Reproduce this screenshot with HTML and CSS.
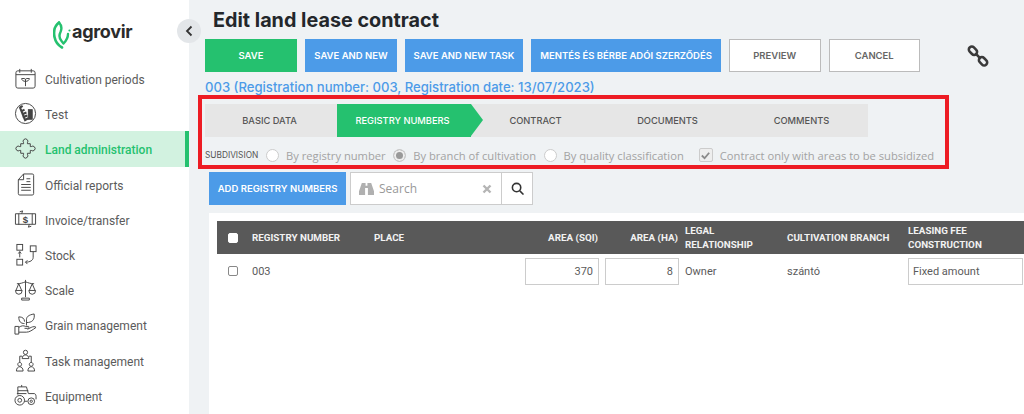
FILE: index.html
```html
<!DOCTYPE html>
<html lang="en">
<head>
  <meta charset="UTF-8" />
  <title>Edit land lease contract</title>
  <link rel="stylesheet" href="styles.css">
</head>
<body>
  <aside class="sidebar">
    <div class="logo">
      <svg class="logo-mark" viewBox="0 0 18 28" width="18" height="28" fill="none" stroke="#25c16f" stroke-linecap="round" stroke-linejoin="round">
        <path stroke-width="2.600" d="M6 1.500C1.500 5 .5 11 1.500 16c1 5 4 8.500 7.500 10.500"/>
        <path stroke-width="2.400" d="M6 1.500c3 3 3 6 1.500 9.500-1.500 3-1.500 6 1 9l2 2.500c2.500-2.500 4.500-6 4.500-9.500"/>
        <circle cx="16.500" cy="9.500" r="1.100" fill="#25c16f" stroke="none"/>
      </svg>
      <span class="logo-text">agrovir</span>
    </div>
    <button class="collapse">
      <svg viewBox="0 0 10 12" width="10" height="12" fill="none" stroke="#333" stroke-width="1.800"><path d="M7.500 1.500 3 6l4.500 4.500"/></svg>
    </button>
    <nav class="menu">
      <a class="menu-item">
        <svg class="menu-icon" viewBox="0 0 24 24"><rect x="2" y="4" width="20" height="18" rx="2"/><path d="M2 8h20M6 2v4M18 2v4M12 20v-7M12 15c-2 0-4-1-4-3h3c1 0 1 2 1 3zM12 15c2 0 4-1 4-3h-3c-1 0-1 2-1 3z"/></svg>
        <span>Cultivation periods</span>
      </a>
      <a class="menu-item">
        <svg class="menu-icon" viewBox="0 0 24 24"><circle cx="12" cy="12" r="10.500"/><path class="thick" d="M6 5l6 15M9 4 6 6M11 8 7 10M13 11l-5 2M14 14l-5 2M15 17l-4 2"/><rect class="solid" x="15" y="8" width="4" height="10"/></svg>
        <span>Test</span>
      </a>
      <a class="menu-item active">
        <svg class="menu-icon" viewBox="0 0 24 24"><path d="M7 7h3V6a2.500 2.500 0 1 1 4 0v1h3v3h1a2.500 2.500 0 1 1 0 4h-1v3h-3v1a2.500 2.500 0 1 1-4 0v-1H7v-3H6a2.500 2.500 0 1 1 0-4h1z"/></svg>
        <span>Land administration</span>
      </a>
      <a class="menu-item">
        <svg class="menu-icon" viewBox="0 0 24 24"><path d="M10 1h9a1.500 1.500 0 0 1 1.500 1.500v19A1.500 1.500 0 0 1 19 23H6a1.500 1.500 0 0 1-1.500-1.500V7zM10 1v6H4.500M13 6h4M13 9h4M7.500 12h10M7.500 15h10M7.500 18h10"/></svg>
        <span>Official reports</span>
      </a>
      <a class="menu-item">
        <svg class="menu-icon" viewBox="0 0 24 24"><path d="M5 6H1.500v11h4M19 6h3.500v11H19M8 6l1-3-3 1M16 17l-1 3 3-1"/><rect x="5" y="6" width="14" height="11"/><text class="icon-text" x="12" y="15.500">$</text></svg>
        <span>Invoice/transfer</span>
      </a>
      <a class="menu-item">
        <svg class="menu-icon" viewBox="0 0 24 24"><rect x="3" y="1.500" width="6" height="6"/><rect x="3" y="17" width="6" height="6"/><rect x="17" y="3" width="6" height="6"/><path d="M6 15V9M4.500 11 6 9l1.500 2M20 9v6c0 3-3 5-8 5M14 18l-2 2 2 2"/></svg>
        <span>Stock</span>
      </a>
      <a class="menu-item">
        <svg class="menu-icon" viewBox="0 0 24 24"><path d="M12 2v18M3 6c4 0 6-1 9-2 3 1 5 2 9 2M8 23h8v-2H8zM5 6l-3 7M5 6l3 7M19 6l-3 7M19 6l3 7M1.500 13a3.500 4 0 0 0 7 0zM15.500 13a3.500 4 0 0 0 7 0z"/></svg>
        <span>Scale</span>
      </a>
      <a class="menu-item">
        <svg class="menu-icon" viewBox="0 0 24 24"><path d="M1 14h4v8H1zM5 15c3-2 5-2 7-1h3c1 0 1 2-1 2h-3M5 20h8c3 0 6-2 10-5-1-1-3-1-5 0l-4 2M13 13V7c0-3 2-5 8-6 1 6-2 9-8 9M11 11c-4 0-6-2-6-7 4 0 6 2 6 5"/></svg>
        <span>Grain management</span>
      </a>
      <a class="menu-item">
        <svg class="menu-icon" viewBox="0 0 24 24"><circle cx="12" cy="3.500" r="2.200"/><path d="M8.500 10c0-5 7-5 7 0zM6 14V7.500h2.500M18 14V7.500h-2.500M6 18a2 2 0 1 0-.1 0zM18 18a2 2 0 1 0-.1 0zM2.500 23c0-6 7-6 7 0zM14.500 23c0-6 7-6 7 0z"/></svg>
        <span>Task management</span>
      </a>
      <a class="menu-item">
        <svg class="menu-icon" viewBox="0 0 24 24"><circle cx="6" cy="17" r="5"/><circle cx="6" cy="17" r="2"/><circle cx="18" cy="18" r="3.500"/><circle cx="18" cy="18" r="1.200"/><path d="M4 11V3h9l2 7h6c1 0 2 1 2 3v3M4 7h11M13 10H3M11 18h3M8 3V1"/></svg>
        <span>Equipment</span>
      </a>
    </nav>
  </aside>

  <main class="content">
    <h1 class="page-title">Edit land lease contract</h1>

    <div class="toolbar">
      <button class="btn btn-green btn-wide">SAVE</button>
      <button class="btn btn-blue btn-wide">SAVE AND NEW</button>
      <button class="btn btn-blue btn-task">SAVE AND NEW TASK</button>
      <button class="btn btn-blue btn-lease">MENTÉS ÉS BÉRBE ADÓI SZERZŐDÉS</button>
      <button class="btn btn-white">PREVIEW</button>
      <button class="btn btn-white">CANCEL</button>
      <svg class="link-icon" viewBox="0 0 24 24" width="22" height="22" fill="none" stroke="#3a3a3a" stroke-width="2.800">
        <rect x="1.500" y="3" width="10" height="6.500" rx="3.200" transform="rotate(45 6.500 6.250)"/>
        <rect x="12.500" y="14.500" width="10" height="6.500" rx="3.200" transform="rotate(45 17.500 17.750)"/>
        <path d="m9.500 9.500 5 5"/>
      </svg>
    </div>

    <div class="record-title">003 (Registration number: 003, Registration date: 13/07/2023)</div>

    <section class="highlight">
      <div class="steps">
        <div class="step">BASIC DATA</div>
        <div class="step step-active">REGISTRY NUMBERS</div>
        <div class="step">CONTRACT</div>
        <div class="step">DOCUMENTS</div>
        <div class="step step-last">COMMENTS</div>
      </div>
      <div class="subdivision">
        <span class="sub-label">SUBDIVISION</span>
        <label class="option"><span class="radio"></span>By registry number</label>
        <label class="option"><span class="radio radio-on"></span>By branch of cultivation</label>
        <label class="option"><span class="radio"></span>By quality classification</label>
        <label class="option option-check">
          <span class="check">
            <svg viewBox="0 0 12 12" width="11" height="11" fill="none" stroke="#8a8a8a" stroke-width="2"><path d="m2 6 3 3 5-6"/></svg>
          </span>Contract only with areas to be subsidized
        </label>
      </div>
    </section>

    <div class="table-actions">
      <button class="btn btn-blue btn-add">ADD REGISTRY NUMBERS</button>
      <div class="search">
        <svg class="binoculars" viewBox="0 0 16 14" width="15" height="14" fill="#b0b0b0"><path d="M3 .500h4v3h2v-3h4l3 9v4H9.500V6h-3v7.500H0v-4z"/></svg>
        <span class="search-text">Search</span>
        <svg class="search-clear" viewBox="0 0 10 10" width="10" height="10" fill="none" stroke="#b5b5b5" stroke-width="2.400"><path d="m1.500 1.500 7 7M8.500 1.500l-7 7"/></svg>
        <span class="search-btn">
          <svg viewBox="0 0 14 14" width="13" height="13" fill="none" stroke="#333" stroke-width="1.700"><circle cx="6" cy="6" r="4.500"/><path d="m9.500 9.500 4 4"/></svg>
        </span>
      </div>
    </div>

    <div class="panel">
      <table class="grid">
        <colgroup>
          <col class="c-check"><col class="c-number"><col class="c-place"><col class="c-area"><col class="c-area"><col class="c-legal"><col class="c-branch"><col class="c-fee">
        </colgroup>
        <thead>
          <tr>
            <th class="cell-check"><span class="box box-white"></span></th>
            <th>REGISTRY NUMBER</th>
            <th>PLACE</th>
            <th class="right">AREA (SQI)</th>
            <th class="right">AREA (HA)</th>
            <th>LEGAL<br>RELATIONSHIP</th>
            <th>CULTIVATION BRANCH</th>
            <th>LEASING FEE<br>CONSTRUCTION</th>
          </tr>
        </thead>
        <tbody>
          <tr>
            <td class="cell-check"><span class="box"></span></td>
            <td>003</td>
            <td></td>
            <td><div class="field field-num">370</div></td>
            <td><div class="field field-num">8</div></td>
            <td>Owner</td>
            <td>szántó</td>
            <td><div class="field field-select">Fixed amount</div></td>
          </tr>
        </tbody>
      </table>
    </div>
  </main>
</body>
</html>
```

FILE: styles.css
```css
* {
  box-sizing: border-box;
}

html, body {
  height: 100%;
}

body {
  margin: 0;
  display: flex;
  overflow: hidden;
  background: #eff2f4;
  font-family: "Open Sans", sans-serif;
  color: #555;
}

/* sidebar */
.sidebar {
  position: relative;
  width: 189px;
  flex: none;
  background: #fff;
}

.logo {
  height: 61px;
  display: flex;
  align-items: center;
  padding: 8px 0 0 53px;
  gap: 1px;
}

.logo-text {
  font-family: Inter, sans-serif;
  font-weight: 700;
  font-size: 18px;
  letter-spacing: -0.300px;
  color: #2b2b2b;
  margin-top: -6px;
}

.collapse {
  position: absolute;
  top: 19px;
  left: 177px;
  width: 24px;
  height: 24px;
  padding: 0;
  border: none;
  border-radius: 50%;
  background: #e3e6e9;
  display: flex;
  align-items: center;
  justify-content: center;
}

.menu-item {
  height: 35.200px;
  display: flex;
  align-items: center;
  gap: 8px;
  padding-left: 14px;
  font-family: Roboto, sans-serif;
  font-size: 12px;
  color: #5b5b5b;
}

.menu-item span {
  padding-top: 3px;
}

.menu-icon {
  width: 23px;
  height: 23px;
  flex: none;
  fill: none;
  stroke: #444;
  stroke-width: 1;
}

.menu-icon .thick {
  stroke-width: 2.200;
}

.menu-icon .solid {
  fill: #444;
}

.icon-text {
  font-family: "Liberation Sans", sans-serif;
  font-size: 10px;
  font-weight: 700;
  text-anchor: middle;
  fill: #444;
  stroke: none;
}

.menu-item.active {
  background: #d2f2e0;
  border-right: 4px solid #25c16f;
  color: #25c16f;
  font-weight: 500;
}

/* main column */
.content {
  flex: 1;
  min-width: 0;
  padding-left: 16px;
}

.page-title {
  margin: 0;
  height: 39px;
  padding: 8px 0 0 8px;
  font-family: Inter, sans-serif;
  font-size: 19.800px;
  line-height: 24px;
  font-weight: 700;
  color: #23272b;
}

.toolbar {
  display: flex;
  align-items: center;
  gap: 8px;
  height: 33px;
}

.btn {
  height: 33px;
  padding: 0;
  border: none;
  font-family: Inter, sans-serif;
  font-size: 9.500px;
  font-weight: 600;
  color: #fff;
}

.btn-wide {
  width: 92px;
}

.btn-task {
  width: 118px;
}

.btn-lease {
  width: 190px;
}

.btn-add {
  width: 137px;
}

.btn-green {
  background: #25c16f;
}

.btn-blue {
  background: #4c9be8;
}

.btn-white {
  width: 91.500px;
  background: #fff;
  border: 1px solid #bbb;
  color: #666;
}

.link-icon {
  margin-left: 39px;
}

.record-title {
  height: 22.500px;
  padding-top: 7px;
  font-family: Inter, sans-serif;
  font-size: 13.100px;
  line-height: 16px;
  font-weight: 500;
  color: #4c9be8;
}

.highlight {
  width: 751px;
  height: 74.500px;
  margin-left: -7px;
  padding: 5.500px 3px 0;
  border: 4px solid #ed1c24;
}

.steps {
  width: 663px;
  height: 33px;
  display: grid;
  grid-template-columns: 132px 134px 132px 132px 133px;
  background: #e6e6e6;
}

.step {
  display: flex;
  align-items: center;
  justify-content: center;
  padding-right: 3px;
  font-family: Inter, sans-serif;
  font-size: 9.300px;
  font-weight: 500;
  color: #555;
}

.step-last {
  padding-right: 0;
}

.step-active {
  position: relative;
  background: #25c16f;
  color: #fff;
}

.step-active::after {
  content: "";
  position: absolute;
  left: 100%;
  top: 0;
  border-left: 12px solid #25c16f;
  border-top: 16.500px solid transparent;
  border-bottom: 16.500px solid transparent;
}

.subdivision {
  display: flex;
  align-items: center;
  height: 20px;
  margin-top: 8px;
  font-size: 11.200px;
  color: #a3a3a3;
}

.sub-label {
  flex: none;
  width: 61px;
  font-family: Inter, sans-serif;
  font-size: 8.300px;
  color: #555;
}

.option {
  flex: none;
  display: flex;
  align-items: center;
  gap: 7px;
  margin-right: 7.500px;
  white-space: nowrap;
}

.option-check {
  margin: 0 0 0 7.500px;
}

.radio {
  width: 13px;
  height: 13px;
  border: 1px solid #ccc;
  border-radius: 50%;
  background: #fff;
}

.radio-on {
  background: #999;
  box-shadow: inset 0 0 0 2px #eee;
}

.check {
  width: 14px;
  height: 14px;
  border: 1px solid #ccc;
  border-radius: 2px;
  background: #eee;
  display: flex;
  align-items: center;
  justify-content: center;
}

/* search and add */
.table-actions {
  display: flex;
  gap: 4px;
  height: 33px;
  margin: 3px 0 8px 4px;
}

.search {
  width: 183px;
  height: 33px;
  display: flex;
  align-items: center;
  background: #fff;
  border: 1px solid #ccc;
  padding-left: 8px;
  font-size: 12px;
  color: #999;
}

.search-text {
  flex: 1;
  margin-left: 5px;
}

.search-clear {
  margin-right: 9px;
}

.search-btn {
  width: 31px;
  height: 31px;
  border-left: 1px solid #ccc;
  display: flex;
  align-items: center;
  justify-content: center;
}

/* table */
.panel {
  margin-left: 4px;
  height: 210px;
  padding: 8px 0 0 8px;
  background: #fff;
}

.grid {
  width: 807px;
  table-layout: fixed;
  border-collapse: collapse;
  font-family: Roboto, sans-serif;
  font-size: 11px;
}

.c-check { width: 35px; }
.c-number { width: 122px; }
.c-place { width: 151px; }
.c-area { width: 80px; }
.c-legal { width: 102px; }
.c-branch { width: 121px; }
.c-fee { width: 116px; }

.grid th {
  height: 33px;
  padding: 0;
  background: #595959;
  color: #f2f2f2;
  text-align: left;
  font-size: 9.800px;
  line-height: 14px;
  font-weight: 700;
}

.grid th.right {
  text-align: right;
  padding-right: 7px;
}

.grid td {
  height: 34px;
  padding: 0;
  color: #5b5b5b;
}

.grid .cell-check {
  padding-left: 11px;
}

.box {
  display: block;
  width: 10px;
  height: 10px;
  border: 1px solid #888;
  border-radius: 2px;
  background: #fff;
}

.box-white {
  border-color: #fff;
}

.field {
  height: 27px;
  width: 74px;
  background: #fff;
  border: 1px solid #ccc;
  line-height: 25px;
  padding: 0 5px;
  color: #5b5b5b;
}

.field-num {
  text-align: right;
}

.field-select {
  width: 115px;
  padding: 0 4px;
}
```
